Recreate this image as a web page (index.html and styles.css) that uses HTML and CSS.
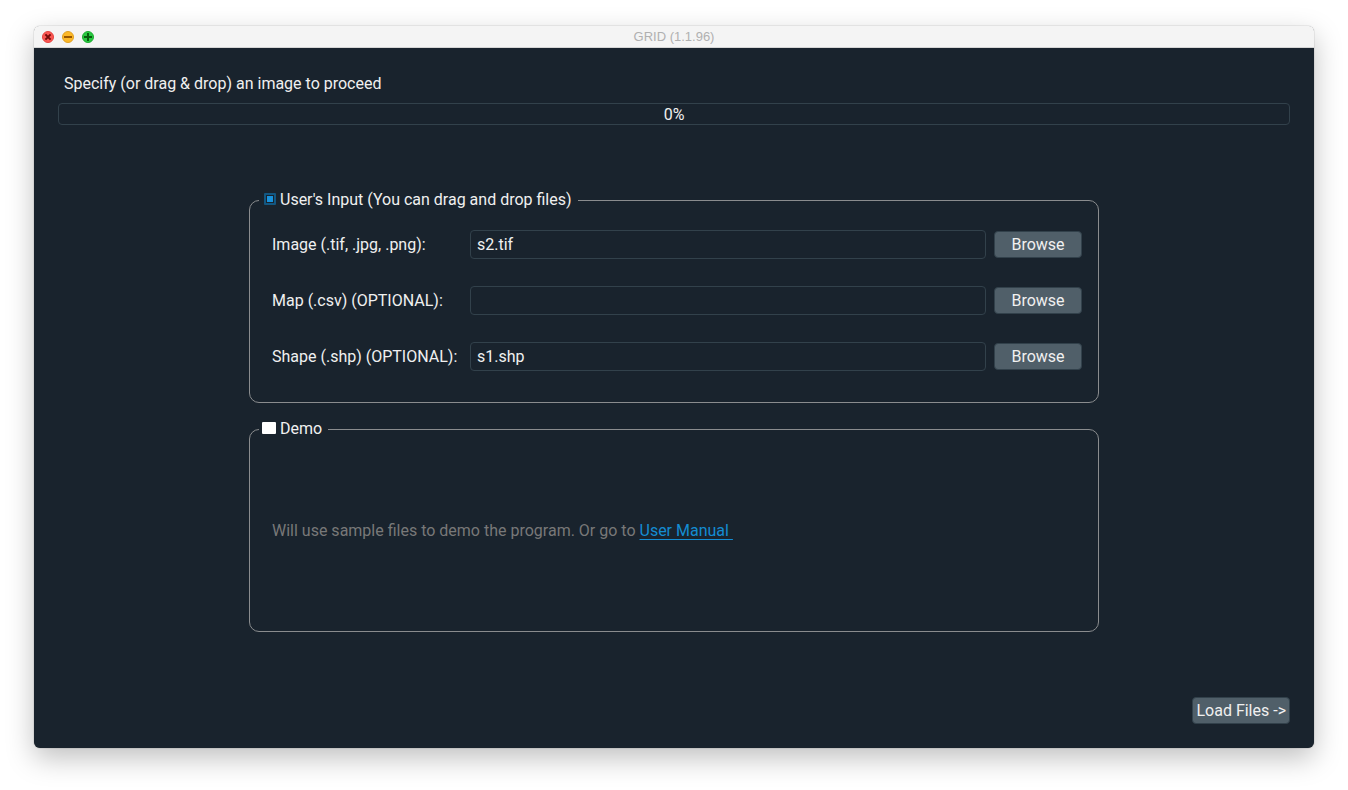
FILE: index.html
```html
<!DOCTYPE html>
<html lang="en">
<head>
<meta charset="utf-8">
<title>GRID (1.1.96)</title>
<link rel="stylesheet" href="styles.css">
</head>
<body>
<div class="window">
  <header class="titlebar">
    <div class="controls">
      <button class="control" type="button" aria-label="Close"><svg viewBox="0 0 12 12"><circle cx="6" cy="6" r="5.5" fill="#fb5753" stroke="#e2443f"/><path d="M3.4 3.4l5.2 5.2M8.6 3.4l-5.2 5.2" stroke="#730a08" stroke-width="2"/></svg></button>
      <button class="control" type="button" aria-label="Minimize"><svg viewBox="0 0 12 12"><circle cx="6" cy="6" r="5.5" fill="#fdb827" stroke="#dfa023"/><path d="M2 6h8" stroke="#985700" stroke-width="2"/></svg></button>
      <button class="control" type="button" aria-label="Zoom"><svg viewBox="0 0 12 12"><circle cx="6" cy="6" r="5.5" fill="#28c840" stroke="#1daa2f"/><path d="M2 6h8M6 2v8" stroke="#075c0c" stroke-width="2"/></svg></button>
    </div>
    <h1 class="title">GRID (1.1.96)</h1>
  </header>
  <main class="content">
    <p class="status" id="status">Specify (or drag &amp; drop) an image to proceed</p>
    <div class="progress" role="progressbar" aria-labelledby="status" aria-valuenow="0" aria-valuemin="0" aria-valuemax="100">0%</div>
    <form class="sources">
      <fieldset class="group">
        <legend class="legend"><label class="toggle"><input class="check" type="checkbox" checked>User's Input (You can drag and drop files)</label></legend>
        <div class="fields">
          <label for="image">Image (.tif, .jpg, .png):</label>
          <input class="path" id="image" type="text" value="s2.tif">
          <button class="button" type="button">Browse</button>
          <label for="map">Map (.csv) (OPTIONAL):</label>
          <input class="path" id="map" type="text">
          <button class="button" type="button">Browse</button>
          <label for="shape">Shape (.shp) (OPTIONAL):</label>
          <input class="path" id="shape" type="text" value="s1.shp">
          <button class="button" type="button">Browse</button>
        </div>
      </fieldset>
      <fieldset class="group">
        <legend class="legend"><label class="toggle"><input class="check" type="checkbox">Demo</label></legend>
        <p class="demo">Will use sample files to demo the program. Or go to <a class="link" href="#manual">User Manual&nbsp;</a></p>
      </fieldset>
    </form>
    <button class="button load" type="button">Load Files -&gt;</button>
  </main>
</div>
</body>
</html>
```
FILE: styles.css
```css
* {
  box-sizing: border-box;
}

body {
  margin: 0;
  min-height: 100vh;
  padding: 26px 34px 42px;
  display: flex;
  background: #fff;
  color: #f0f0f0;
  font: 16px/24px Roboto, sans-serif;
}

.window {
  flex: 1;
  display: flex;
  flex-direction: column;
  border-radius: 6px;
  background: #19232d;
  box-shadow: 0 0 1px rgba(0, 0, 0, 0.6), 0 10px 28px rgba(0, 0, 0, 0.25);
}

.titlebar {
  display: grid;
  grid-template-columns: 1fr auto 1fr;
  align-items: center;
  height: 22px;
  padding: 0 8px;
  border-bottom: 1px solid #d5d5d5;
  border-radius: 5px 5px 0 0;
  background: #f4f4f4;
}

.controls {
  display: flex;
  gap: 8px;
}

.control {
  width: 12px;
  height: 12px;
  padding: 0;
  border: 0;
  background: none;
}

.control svg {
  display: block;
}

.title {
  margin: 0;
  color: #b0b0b0;
  font: 13px/20px "Liberation Sans", sans-serif;
}

.content {
  flex: 1;
  display: flex;
  flex-direction: column;
  padding: 24px;
}

.status {
  margin: 0 6px 7px;
}

.progress {
  height: 22px;
  border: 1px solid #32414b;
  border-radius: 4px;
  line-height: 21px;
  text-align: center;
}

.sources {
  flex: 1;
  display: flex;
  flex-direction: column;
  justify-content: center;
  align-self: center;
  gap: 14px;
  width: 100%;
  max-width: 850px;
  padding-bottom: 2px;
}

.group {
  min-width: 0;
  min-height: 215px;
  margin: 0;
  padding: 18px 16px 31px 22px;
  border: 1px solid #8a8c8e;
  border-radius: 10px;
}

.legend {
  margin-left: -13px;
  padding: 0 6px 0 3px;
}

.toggle {
  display: flex;
  align-items: center;
  gap: 4px;
}

.check {
  appearance: none;
  width: 14px;
  height: 12px;
  margin: 0 0 2px;
  border-radius: 1px;
  background: #fff;
}

.check:checked {
  width: 12px;
  margin-left: 2px;
  border: 2px solid #125782;
  background: #1992dc;
  box-shadow: inset 0 0 0 1px #19232d;
}

.fields {
  display: grid;
  grid-template-columns: 190px 1fr 88px;
  align-items: center;
  gap: 27px 8px;
}

.path {
  width: 100%;
  height: 29px;
  padding: 0 6px;
  border: 1px solid #32414b;
  border-radius: 4px;
  background: #19232d;
  color: inherit;
  font: inherit;
}

.button {
  height: 27px;
  padding: 0 3px;
  border: 1px solid #32414b;
  border-radius: 4px;
  background: #505f69;
  color: inherit;
  font: inherit;
}

.load {
  align-self: flex-end;
}

.demo {
  margin: 0;
  padding-top: 60px;
  color: #787878;
}

.link {
  color: #148cd2;
  text-underline-offset: 3px;
}
```
